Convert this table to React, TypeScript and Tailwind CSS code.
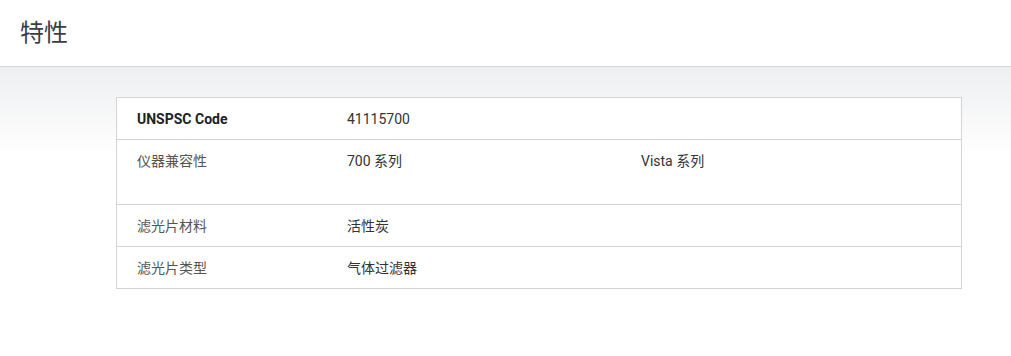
const ROWS: { label: string; values: string[]; bold?: boolean; tall?: boolean }[] = [
  { label: "UNSPSC Code", values: ["41115700"], bold: true },
  { label: "仪器兼容性", values: ["700 系列", "Vista 系列"], tall: true },
  { label: "滤光片材料", values: ["活性炭"] },
  { label: "滤光片类型", values: ["气体过滤器"] },
];

export default function App() {
  return (
    <div
      className="w-[1011px] h-[356px] bg-white overflow-hidden"
      style={{ fontFamily: 'Roboto, "Noto Sans CJK SC", sans-serif' }}
    >
      {/* Section heading */}
      <div className="h-[67px] border-b border-[#d4d5d7] flex items-center pl-[20px]">
        <h2 className="text-[24px] leading-[32px] text-[#3a3f47] font-normal">特性</h2>
      </div>

      {/* Spec table */}
      <div className="bg-[linear-gradient(to_bottom,#eeeff1,#ffffff_90px)] pt-[30px] h-[289px]">
        <div className="ml-[116px] w-[846px] border border-[#d3d3d3] bg-white">
          {ROWS.map((row, i) => (
            <div
              key={row.label}
              className={`flex text-[14px] leading-[20px] ${i > 0 ? "border-t border-[#d3d3d3]" : ""} ${
                row.tall ? "pt-[11px] pb-[33px]" : "pt-[11px] pb-[10px]"
              }`}
            >
              <div
                className={`w-[230px] pl-[20px] shrink-0 ${
                  row.bold ? "font-bold text-[#222]" : "text-[#555]"
                }`}
              >
                {row.label}
              </div>
              {row.values.map((v) => (
                <div key={v} className="w-[294px] shrink-0 text-[#333]">
                  {v}
                </div>
              ))}
            </div>
          ))}
        </div>
      </div>
    </div>
  );
}
